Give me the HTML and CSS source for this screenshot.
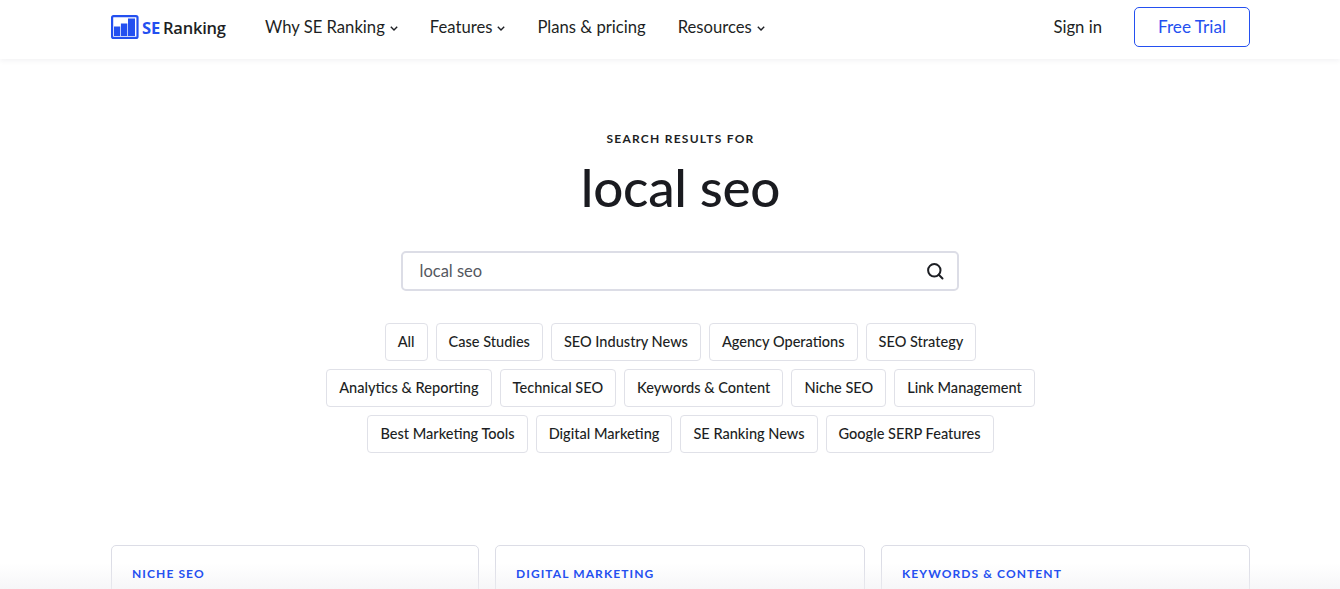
FILE: index.html
```html
<!DOCTYPE html>
<html lang="en">
<head>
<meta charset="utf-8">
<title>Search results for local seo</title>
<link rel="stylesheet" href="styles.css">
</head>
<body>
<header class="site-header">
  <div class="container header-row">
    <a class="logo" href="#">
      <svg class="logo-icon" width="28" height="24" viewBox="0 0 28 24">
        <rect x="1.1" y="1.1" width="25.4" height="21.8" rx="1.5" fill="#fff" stroke="#2450f0" stroke-width="2.2"/>
        <rect x="3" y="11.5" width="6.2" height="9.5" fill="#2450f0"/>
        <rect x="9.9" y="8.5" width="6.4" height="12.5" fill="#2450f0"/>
        <rect x="17" y="3.5" width="7" height="17.5" fill="#2450f0"/>
      </svg>
      <span class="logo-se">SE</span><span class="logo-ranking">Ranking</span>
    </a>
    <nav class="main-nav">
      <a href="#">Why SE Ranking<svg class="chev" width="8" height="5" viewBox="0 0 8 5"><path d="M.8.8 4 4 7.2.8" fill="none" stroke="#1d1f24" stroke-width="1.4"/></svg></a>
      <a href="#">Features<svg class="chev" width="8" height="5" viewBox="0 0 8 5"><path d="M.8.8 4 4 7.2.8" fill="none" stroke="#1d1f24" stroke-width="1.4"/></svg></a>
      <a href="#">Plans &amp; pricing</a>
      <a href="#">Resources<svg class="chev" width="8" height="5" viewBox="0 0 8 5"><path d="M.8.8 4 4 7.2.8" fill="none" stroke="#1d1f24" stroke-width="1.4"/></svg></a>
    </nav>
    <div class="header-actions">
      <a class="sign-in" href="#">Sign in</a>
      <a class="trial" href="#">Free Trial</a>
    </div>
  </div>
</header>

<main class="container">
  <section class="hero">
    <p class="eyebrow">SEARCH RESULTS FOR</p>
    <h1 class="title">local seo</h1>
    <form class="search">
      <span class="search-text">local seo</span>
      <svg width="18" height="18" viewBox="0 0 18 18"><circle cx="8.3" cy="8.3" r="6.2" fill="none" stroke="#1d1f24" stroke-width="2"/><path d="M12.8 12.8 16.5 16.5" stroke="#1d1f24" stroke-width="2" stroke-linecap="round"/></svg>
    </form>
    <div class="tags">
      <div class="tag-row">
        <a class="tag" href="#">All</a><a class="tag" href="#">Case Studies</a><a class="tag" href="#">SEO Industry News</a><a class="tag" href="#">Agency Operations</a><a class="tag" href="#">SEO Strategy</a>
      </div>
      <div class="tag-row">
        <a class="tag" href="#">Analytics &amp; Reporting</a><a class="tag" href="#">Technical SEO</a><a class="tag" href="#">Keywords &amp; Content</a><a class="tag" href="#">Niche SEO</a><a class="tag" href="#">Link Management</a>
      </div>
      <div class="tag-row">
        <a class="tag" href="#">Best Marketing Tools</a><a class="tag" href="#">Digital Marketing</a><a class="tag" href="#">SE Ranking News</a><a class="tag" href="#">Google SERP Features</a>
      </div>
    </div>
  </section>
  <section class="cards">
    <article class="card"><span class="cat">NICHE SEO</span></article>
    <article class="card"><span class="cat">DIGITAL MARKETING</span></article>
    <article class="card"><span class="cat">KEYWORDS &amp; CONTENT</span></article>
  </section>
</main>
<div class="fade"></div>
</body>
</html>
```
FILE: styles.css
```css
* { box-sizing: border-box; }
html, body { margin: 0; height: 589px; overflow: hidden; }
body { background: #fff; color: #1d1f24; font-family: "Lato", "Open Sans", sans-serif; position: relative; }
a { color: inherit; text-decoration: none; }
.container { width: 1139px; margin-left: 111px; }

.site-header { height: 59px; background: #fff; box-shadow: 0 1px 6px rgba(30, 35, 60, .07); }
.header-row { display: flex; align-items: center; height: 54px; }
.logo { display: flex; align-items: center; width: 154px; font-family: "Open Sans", sans-serif; font-size: 16.5px; font-weight: 600; letter-spacing: -.2px; }
.logo-icon { margin-right: 3px; }
.logo-se { color: #2450f0; font-weight: 700; margin-right: 3px; }
.main-nav { display: flex; gap: 32px; font-size: 16.65px; padding-bottom: 1px; }
.main-nav a { display: flex; align-items: center; }
.chev { margin-left: 5px; margin-top: 3px; }
.header-actions { margin-left: auto; display: flex; align-items: center; gap: 32px; font-size: 16.7px; }
.sign-in { padding-bottom: 1px; }
.trial { width: 116px; height: 40px; display: flex; align-items: center; justify-content: center; border: 1px solid #2450f0; border-radius: 5px; color: #2450f0; font-size: 17.2px; padding-bottom: 1px; }

.hero { display: flex; flex-direction: column; align-items: center; padding-top: 72px; }
.eyebrow { margin: 0; font-size: 12px; line-height: 16px; font-weight: 700; letter-spacing: 1.25px; }
.title { margin: 7px 0 -1px; font-size: 53px; line-height: 66px; font-weight: 500; letter-spacing: -.3px; color: #1a1b20; padding-bottom: 3px; }
.search { margin: 29px 2px 0 0; width: 558px; height: 40px; border: 2px solid #dcdde6; border-radius: 5px; display: flex; align-items: center; justify-content: space-between; padding: 0 13px 0 17px; }
.search-text { font-size: 16.5px; color: #55585f; padding-bottom: 1px; }
.tags { margin-top: 32px; display: flex; flex-direction: column; gap: 8px; align-items: center; }
.tag-row { display: flex; gap: 8px; }
.tag { height: 38px; padding: 0 12px 2px; display: flex; align-items: center; border: 1px solid #e0e1e8; border-radius: 4px; font-size: 14.55px; font-weight: 500; }

.cards { margin-top: 92px; display: grid; grid-template-columns: 368px 370px 369px; gap: 16px; }
.card { height: 200px; border: 1px solid #dcdde6; border-radius: 5px; padding: 21px 20px; }
.cat { display: block; position: relative; z-index: 1; font-size: 12px; line-height: 14px; font-weight: 700; letter-spacing: 1.1px; color: #2450f0; }

.fade { position: absolute; left: 0; right: 0; bottom: 0; height: 26px; background: linear-gradient(to bottom, rgba(240, 240, 243, 0), rgba(240, 240, 243, .6)); }
```
